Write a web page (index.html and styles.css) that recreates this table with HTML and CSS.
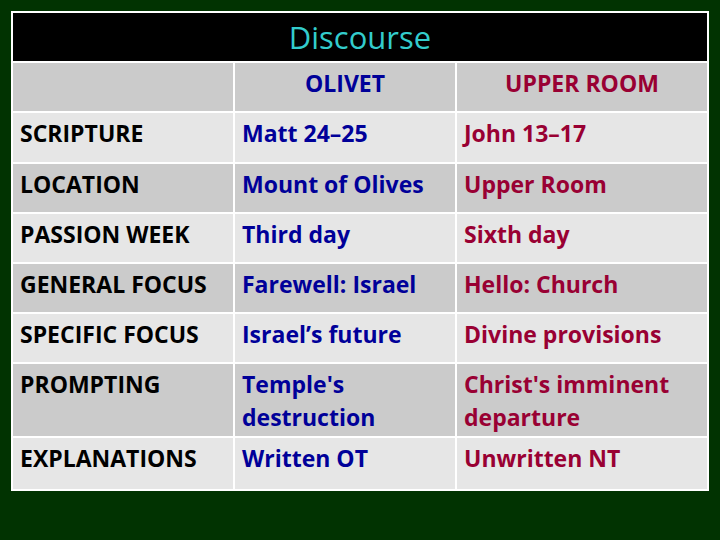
FILE: index.html
```html
<!DOCTYPE html>
<html>
<head>
<meta charset="utf-8">
<link rel="stylesheet" href="styles.css">
</head>
<body>
<div class="slide">
  <div class="table">
    <div class="title">Discourse</div>

    <div class="cell head dark"></div>
    <div class="cell head dark blue center">OLIVET</div>
    <div class="cell head dark red center">UPPER ROOM</div>

    <div class="cell light">SCRIPTURE</div>
    <div class="cell light blue">Matt 24–25</div>
    <div class="cell light red">John 13–17</div>

    <div class="cell dark">LOCATION</div>
    <div class="cell dark blue">Mount of Olives</div>
    <div class="cell dark red">Upper Room</div>

    <div class="cell light">PASSION WEEK</div>
    <div class="cell light blue">Third day</div>
    <div class="cell light red">Sixth day</div>

    <div class="cell dark">GENERAL FOCUS</div>
    <div class="cell dark blue">Farewell: Israel</div>
    <div class="cell dark red">Hello: Church</div>

    <div class="cell light">SPECIFIC FOCUS</div>
    <div class="cell light blue">Israel’s future</div>
    <div class="cell light red">Divine provisions</div>

    <div class="cell dark">PROMPTING</div>
    <div class="cell dark blue">Temple's<br>destruction</div>
    <div class="cell dark red">Christ's imminent<br>departure</div>

    <div class="cell light">EXPLANATIONS</div>
    <div class="cell light blue">Written OT</div>
    <div class="cell light red">Unwritten NT</div>
  </div>
</div>
</body>
</html>
```

FILE: styles.css
```css
html, body {
  margin: 0;
  padding: 0;
}

body {
  width: 720px;
  height: 540px;
  background: #013301;
  font-family: "Open Sans", Lato, "Liberation Sans", sans-serif;
  overflow: hidden;
}

.slide {
  padding: 11px 0 0 11px;
}

.table {
  display: grid;
  grid-template-columns: 220px 220px 250px;
  grid-template-rows: 48px 48px 49px 48px 48px 48px 48px 72px 51px;
  gap: 2px;
  padding: 2px;
  width: 698px;
  box-sizing: border-box;
  background: #ffffff;
}

.title {
  grid-column: 1 / 4;
  background: #000000;
  color: #33cccc;
  font-size: 31px;
  font-weight: 400;
  display: flex;
  align-items: center;
  justify-content: center;
  padding-bottom: 1px;
}

.cell {
  font-size: 23px;
  font-weight: 700;
  line-height: 33px;
  padding: 4px 6px 0 7px;
  color: #000000;
  white-space: nowrap;
}

.center {
  text-align: center;
  padding-left: 0;
  padding-right: 0;
}

.light {
  background: #e6e6e6;
}

.dark {
  background: #cbcbcb;
}

.blue {
  color: #000099;
}

.red {
  color: #990033;
}
```
